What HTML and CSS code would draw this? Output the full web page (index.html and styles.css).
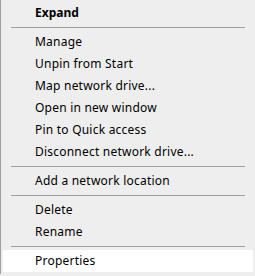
FILE: index.html
```html
<!DOCTYPE html>
<html lang="en">
<head>
    <meta charset="UTF-8">
    <title>Context Menu</title>
    <link rel="stylesheet" href="styles.css">
</head>
<body>
    <ul class="menu">
        <li class="menu-item bold">Expand</li>
        <li class="separator"></li>
        <li class="menu-item">Manage</li>
        <li class="menu-item">Unpin from Start</li>
        <li class="menu-item">Map network drive...</li>
        <li class="menu-item">Open in new window</li>
        <li class="menu-item">Pin to Quick access</li>
        <li class="menu-item">Disconnect network drive...</li>
        <li class="separator"></li>
        <li class="menu-item">Add a network location</li>
        <li class="separator"></li>
        <li class="menu-item">Delete</li>
        <li class="menu-item">Rename</li>
        <li class="separator"></li>
        <li class="menu-item active">Properties</li>
    </ul>
</body>
</html>
```

FILE: styles.css
```css
* {
    margin: 0;
    padding: 0;
    box-sizing: border-box;
}

body {
    font-family: 'Noto Sans', 'Open Sans', sans-serif;
    font-size: 12px;
    color: #000;
    background: #eeeeee;
    overflow: hidden;
}

.menu {
    list-style: none;
    width: 256px;
    background: #eeeeee;
    border-left: 1px solid #a0a0a0;
    border-right: 1px solid #a0a0a0;
    padding: 2px;
}

.menu-item {
    height: 22px;
    line-height: 22px;
    padding-left: 32px;
    white-space: nowrap;
    letter-spacing: 0.22px;
}

.menu-item.bold {
    font-weight: bold;
    letter-spacing: 0;
}

.menu-item.active {
    background: #ffffff;
}

/* thin line between groups */
.separator {
    height: 7px;
    padding: 3px 8px;
}

.separator::before {
    content: '';
    display: block;
    height: 1px;
    background: #a0a0a0;
}
```
